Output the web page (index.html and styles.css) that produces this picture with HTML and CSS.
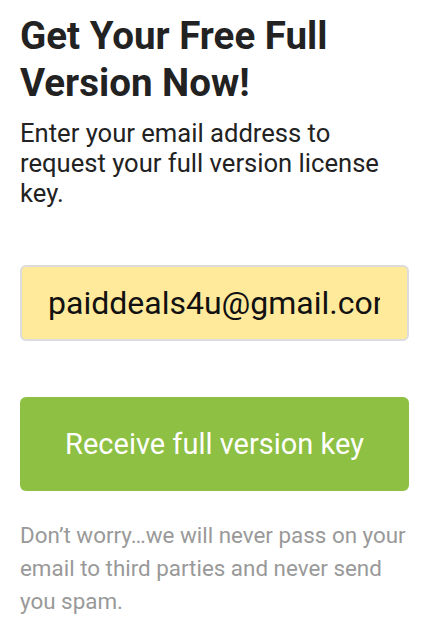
FILE: index.html
```html
<!DOCTYPE html>
<html>
<head>
<meta charset="utf-8">
<link rel="stylesheet" href="styles.css">
</head>
<body>
<div class="page">
  <h1 class="title">Get Your Free Full Version Now!</h1>
  <p class="lead">Enter your email address to request your full version license key.</p>
  <div class="field"><span class="field-text">paiddeals4u@gmail.com</span></div>
  <div class="btn">Receive full version key</div>
  <p class="note">Don’t worry…we will never pass on your email to third parties and never send you spam.</p>
</div>
</body>
</html>
```
FILE: styles.css
```css
html, body {
  margin: 0;
  padding: 0;
  background: #fff;
}
.page {
  font-family: Roboto, "Noto Sans", sans-serif;
  padding: 12px 12px 0 20px;
  display: flex;
  flex-direction: column;
}
.title {
  margin: 0;
  font-size: 38.5px;
  line-height: 47px;
  font-weight: 700;
  color: #222;
}
.lead {
  margin: 12px 0 0;
  font-size: 25.6px;
  line-height: 30px;
  color: #222;
}
.field {
  margin-top: 57px;
  height: 76px;
  box-sizing: border-box;
  border: 2px solid #dcdcdc;
  border-radius: 6px;
  background: #ffea9c;
  display: flex;
  align-items: center;
  padding: 0 27px 0 26px;
}
.field-text {
  flex: 1;
  overflow: hidden;
  white-space: nowrap;
  font-size: 32px;
  color: #111;
}
.btn {
  margin-top: 56px;
  height: 94px;
  border-radius: 6px;
  background: #8dc043;
  color: #fff;
  font-size: 29px;
  display: flex;
  align-items: center;
  justify-content: center;
}
.note {
  margin: 28px 0 0;
  font-size: 22.4px;
  line-height: 33px;
  color: #999;
}
```
